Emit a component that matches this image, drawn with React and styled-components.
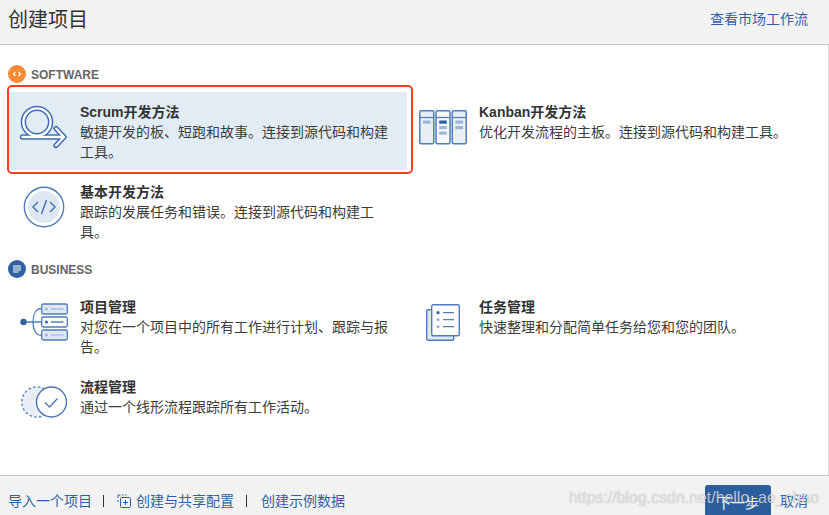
import React from "react";
import styled, { createGlobalStyle } from "styled-components";

const GlobalStyle = createGlobalStyle`
  html, body {
    margin: 0;
    height: 100%;
    overflow: hidden;
    background: #fff;
  }
  body {
    font-family: "Liberation Sans", "Noto Sans CJK SC", sans-serif;
    color: #333;
  }
`;

const Page = styled.div`
  display: flex;
  flex-direction: column;
  height: 515px;
  overflow: hidden;
`;

const Header = styled.header`
  display: flex;
  align-items: center;
  justify-content: space-between;
  flex: 0 0 45px;
  box-sizing: border-box;
  padding: 0 21px 7px 8px;
  background: #f2f2f2;
  border-bottom: 1px solid #c9c9c9;
`;

const Title = styled.h1`
  margin: 0;
  font-size: 20px;
  font-weight: 400;
  color: #333;
`;

const Link = styled.a`
  font-size: 14px;
  line-height: 20px;
  color: #2f62a3;
  white-space: nowrap;
`;

const Main = styled.main`
  flex: 1;
  min-height: 0;
  padding-top: 20px;
  border-right: 1px solid #dcdcdc;
`;

const SectionHead = styled.div`
  display: flex;
  align-items: center;
  gap: 5px;
  height: 18px;
  margin: ${(p) => (p.$first ? "0" : "8px")} 0 9px 8px;
  font-size: 12px;
  font-weight: 700;
  color: #666;
`;

const SectionLabel = styled.span`
  padding-top: 2px;
`;

const Grid = styled.div`
  display: grid;
  grid-template-columns: 398px 1fr;
  grid-auto-rows: 80px;
  column-gap: 1px;
  margin-left: 9px;
`;

const Item = styled.div`
  position: relative;
  display: flex;
  height: 78px;
  background: ${(p) => (p.$selected ? "#e2ecf5" : "transparent")};

  ${(p) =>
    p.$selected &&
    `
    &::after {
      content: "";
      position: absolute;
      top: -7px;
      left: -2px;
      right: -6px;
      bottom: -4px;
      border: 2.5px solid #f5401f;
      border-radius: 5px;
    }
  `}
`;

const IconSlot = styled.div`
  flex: 0 0 71px;
  height: 70px;
  padding-right: 1px;
  box-sizing: border-box;
  display: flex;
  align-items: center;
  justify-content: center;
`;

const ItemBody = styled.div`
  width: 315px;
  padding-top: 10px;
  font-size: 14px;
  line-height: 20px;
`;

const ItemTitle = styled.div`
  font-weight: 700;
  color: #333;
`;

const ItemText = styled.div`
  color: #3c3c3c;
`;

const Footer = styled.footer`
  position: relative;
  flex: 0 0 40px;
  box-sizing: border-box;
  min-height: 0;
  display: flex;
  align-items: flex-start;
  justify-content: space-between;
  padding: 0 21px 0 8px;
  background: #f2f2f2;
  border-top: 1px solid #c9c9c9;
  overflow: hidden;
`;

const FooterLinks = styled.div`
  display: flex;
  align-items: center;
  margin-top: 15px;
`;

const Sep = styled.span`
  width: 1px;
  height: 12px;
  margin: 0 ${(p) => p.$right}px 0 ${(p) => p.$left}px;
  background: #333;
`;

const FooterIcon = styled.svg`
  margin-right: 5px;
`;

const Actions = styled.div`
  display: flex;
  align-items: flex-start;
  gap: 9px;
  margin-top: 9px;
`;

const NextButton = styled.button`
  width: 66px;
  height: 34px;
  padding: 0;
  border: 0;
  border-radius: 3px;
  background: #2a5e9e;
  color: #fff;
  font: inherit;
  font-size: 14px;
`;

const CancelLink = styled(Link)`
  margin-top: 6px;
`;

const Watermark = styled.div`
  position: absolute;
  top: 12px;
  left: 569px;
  font-size: 15.9px;
  line-height: 20px;
  color: rgba(255, 255, 255, 0.62);
  text-shadow: 0 0 1px rgba(110, 110, 110, 0.6);
  white-space: nowrap;
  pointer-events: none;
`;

const SoftwareBadge = () => (
  <svg width="18" height="18" viewBox="0 0 18 18">
    <circle cx="9" cy="9" r="9" fill="#f68b33" />
    <path d="M7.4 7 5.6 9l1.8 2M10.6 7l1.8 2-1.8 2" fill="none" stroke="#fff" strokeWidth="1.2" />
  </svg>
);

const BusinessBadge = () => (
  <svg width="18" height="18" viewBox="0 0 18 18">
    <circle cx="9" cy="9" r="9" fill="#2f62a3" />
    <path d="M5 6h8M5 8h8M5 10h8M5 12h5.5" fill="none" stroke="#fff" strokeWidth="1" />
  </svg>
);

const ScrumIcon = () => (
  <svg width="50" height="44" viewBox="0 0 50 44">
    <g fill="none" stroke="#3f6db0" strokeWidth="5.4" strokeLinecap="round" strokeLinejoin="round">
      <circle cx="18" cy="17" r="13.6" />
      <path d="M3.5 32H44M37 23.5 45 32 37 40.5" />
    </g>
    <g fill="none" stroke="#fff" strokeWidth="2.4" strokeLinecap="round" strokeLinejoin="round">
      <circle cx="18" cy="17" r="13.6" />
      <path d="M3.5 32H44M37 23.5 45 32 37 40.5" />
    </g>
  </svg>
);

const KanbanColumn = ({ x, fill, bars }) => (
  <g>
    <rect x={x} y="0.75" width="14" height="33" rx="1.5" fill={fill} stroke="#4f7cba" strokeWidth="1.5" />
    <path d={`M${x} 7.5h14`} stroke="#4f7cba" strokeWidth="1.2" />
    {bars.map((b, i) => (
      <rect key={i} x={x + 3.2} y={b.y} width="7.6" height="3.2" fill={b.c} />
    ))}
  </g>
);

const KanbanIcon = () => (
  <svg width="48" height="35" viewBox="0 0 48 35">
    <KanbanColumn x={0.75} fill="#e8edf6" bars={[{ y: 10.5, c: "#9db6d8" }]} />
    <KanbanColumn
      x={17}
      fill="#f6f8fc"
      bars={[
        { y: 10.5, c: "#2f62a3" },
        { y: 16, c: "#9db6d8" },
        { y: 21.5, c: "#9db6d8" },
      ]}
    />
    <KanbanColumn
      x={33.25}
      fill="#e8edf6"
      bars={[
        { y: 10.5, c: "#9db6d8" },
        { y: 16, c: "#9db6d8" },
      ]}
    />
  </svg>
);

const CodeIcon = () => (
  <svg width="42" height="42" viewBox="0 0 42 42">
    <circle cx="21" cy="21" r="19.7" fill="#fff" stroke="#4f7cba" strokeWidth="1.4" />
    <circle cx="21" cy="21" r="16" fill="#dfe7f3" />
    <path d="M15 16l-5 5 5 5M27 16l5 5-5 5M23.5 14l-5 14" fill="none" stroke="#4a76b5" strokeWidth="1.5" />
  </svg>
);

const ServerRow = ({ y, strong }) => (
  <g>
    <rect x="21.7" y={y} width="25.6" height="10" rx="1.5" fill={strong ? "#fff" : "#dfe7f3"} stroke="#4f7cba" strokeWidth="1.3" />
    <circle cx="26.5" cy={y + 5} r="1.5" fill={strong ? "#2f62a3" : "#9db6d8"} />
    <path d={`M31 ${y + 5}h12.5`} stroke={strong ? "#2f62a3" : "#9db6d8"} strokeWidth="1.2" />
  </g>
);

const ProjectIcon = () => (
  <svg width="48" height="38" viewBox="0 0 48 38">
    <path d="M4 19h17.5M21.5 5.5C16 5.5 13 11 13 19s3 13.5 8.5 13.5" fill="none" stroke="#4f7cba" strokeWidth="1.3" />
    <circle cx="3.5" cy="19" r="3.2" fill="#2f62a3" />
    <ServerRow y={1} />
    <ServerRow y={14} strong />
    <ServerRow y={27} />
  </svg>
);

const TaskIcon = () => (
  <svg width="34" height="37" viewBox="0 0 34 37">
    <rect x="0.7" y="5.7" width="27" height="30.6" rx="1.5" fill="#dfe7f3" stroke="#4f7cba" strokeWidth="1.4" />
    <rect x="5.7" y="0.7" width="27.6" height="31" rx="1.5" fill="#fff" stroke="#4f7cba" strokeWidth="1.4" />
    <circle cx="12" cy="8.7" r="1.6" fill="#2f62a3" />
    <circle cx="12" cy="15.7" r="1.6" fill="#9db6d8" />
    <circle cx="12" cy="22.7" r="1.6" fill="#9db6d8" />
    <path d="M17 8.7h11M17 15.7h11M17 22.7h11" stroke="#4f7cba" strokeWidth="1.3" />
  </svg>
);

const FlowIcon = () => (
  <svg width="46" height="32" viewBox="0 0 46 32">
    <circle cx="16" cy="16" r="15.2" fill="#e9edf5" stroke="#4f7cba" strokeWidth="1.3" strokeDasharray="2.6 2.2" />
    <circle cx="30.5" cy="16" r="15" fill="#fff" stroke="#4a76b5" strokeWidth="1.4" />
    <path d="M24 16.5l4.5 4.5 8-8.5" fill="none" stroke="#4a76b5" strokeWidth="1.3" />
  </svg>
);

const ConfigIcon = () => (
  <FooterIcon width="14" height="14" viewBox="0 0 14 14">
    <path d="M3.5 1H1v3M1 6v2M5 1h1.5M8 1h1.5" fill="none" stroke="#2f62a3" strokeWidth="1" />
    <rect x="3.5" y="3.5" width="10" height="10" rx="1" fill="none" stroke="#2f62a3" strokeWidth="1" />
    <path d="M8.5 6v5M6 8.5h5" stroke="#2f62a3" strokeWidth="1" />
  </FooterIcon>
);

const software = [
  {
    icon: <ScrumIcon />,
    title: "Scrum开发方法",
    text: "敏捷开发的板、短跑和故事。连接到源代码和构建工具。",
    selected: true,
  },
  { icon: <KanbanIcon />, title: "Kanban开发方法", text: "优化开发流程的主板。连接到源代码和构建工具。" },
  { icon: <CodeIcon />, title: "基本开发方法", text: "跟踪的发展任务和错误。连接到源代码和构建工具。" },
];

const business = [
  { icon: <ProjectIcon />, title: "项目管理", text: "对您在一个项目中的所有工作进行计划、跟踪与报告。" },
  { icon: <TaskIcon />, title: "任务管理", text: "快速整理和分配简单任务给您和您的团队。" },
  { icon: <FlowIcon />, title: "流程管理", text: "通过一个线形流程跟踪所有工作活动。" },
];

const renderItems = (items) =>
  items.map((item) => (
    <Item key={item.title} $selected={item.selected}>
      <IconSlot>{item.icon}</IconSlot>
      <ItemBody>
        <ItemTitle>{item.title}</ItemTitle>
        <ItemText>{item.text}</ItemText>
      </ItemBody>
    </Item>
  ));

const App = () => (
  <Page>
    <GlobalStyle />
    <Header>
      <Title>创建项目</Title>
      <Link>查看市场工作流</Link>
    </Header>
    <Main>
      <SectionHead $first>
        <SoftwareBadge />
        <SectionLabel>SOFTWARE</SectionLabel>
      </SectionHead>
      <Grid>{renderItems(software)}</Grid>
      <SectionHead>
        <BusinessBadge />
        <SectionLabel>BUSINESS</SectionLabel>
      </SectionHead>
      <Grid>{renderItems(business)}</Grid>
    </Main>
    <Footer>
      <FooterLinks>
        <Link>导入一个项目</Link>
        <Sep $left={11} $right={13} />
        <ConfigIcon />
        <Link>创建与共享配置</Link>
        <Sep $left={12} $right={14} />
        <Link>创建示例数据</Link>
      </FooterLinks>
      <Actions>
        <NextButton>下一步</NextButton>
        <CancelLink>取消</CancelLink>
      </Actions>
      <Watermark>https://blog.csdn.net/hello_ae_chao</Watermark>
    </Footer>
  </Page>
);

export default App;
